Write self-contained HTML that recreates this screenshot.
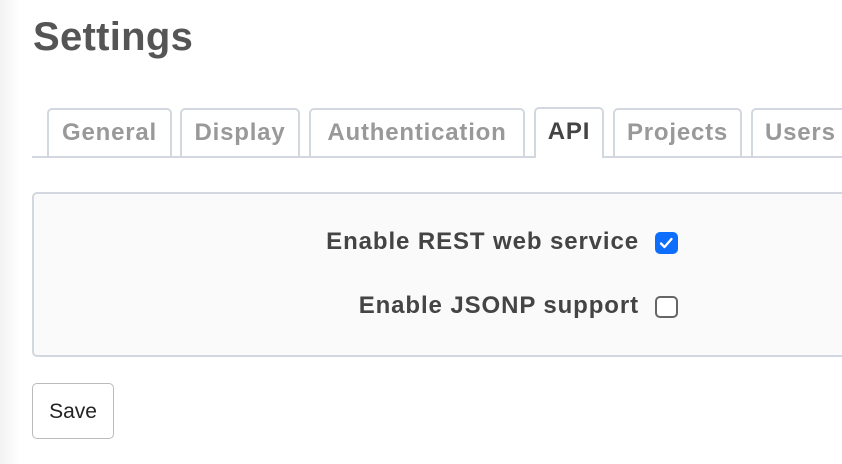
<!DOCTYPE html>
<html><head><style>
body{margin:0;width:842px;height:464px;overflow:hidden;background:#fff;font-family:"Liberation Sans",sans-serif;position:relative}
.strip{position:absolute;left:0;top:0;width:20px;height:464px;background:linear-gradient(to right,#f2f2f2,#fff)}
h1{position:absolute;left:33px;top:15px;margin:0;font-size:40px;font-weight:bold;color:#555;letter-spacing:0.3px}
.line{position:absolute;left:32px;right:0;top:156px;height:2px;background:#d3d8e0}
.tab{position:absolute;top:108px;height:48px;border:2px solid #d3d8e0;border-bottom:none;border-radius:5px 5px 0 0;box-sizing:border-box;font-weight:bold;font-size:24px;letter-spacing:0.8px;color:#999;line-height:46px;text-align:center;background:#fff;white-space:nowrap}
.tab.a{top:107px;height:51px;color:#444}
.panel{position:absolute;left:32px;top:192px;width:830px;height:165px;box-sizing:border-box;border:2px solid #d3d8e0;border-radius:5px;background:#fafafa}
.lbl{position:absolute;right:203px;font-weight:bold;font-size:24px;letter-spacing:0.9px;color:#444}
.cb{position:absolute;left:655px;width:23px;height:22px;box-sizing:border-box;border-radius:5px}
.btn{position:absolute;left:32px;top:383px;width:82px;height:56px;box-sizing:border-box;border:1.5px solid #bbb;border-radius:5px;font-size:21px;line-height:56px;text-align:center;color:#222;background:#fff}
</style></head><body>
<div class="strip"></div>
<h1>Settings</h1>
<div class="line"></div>
<div class="tab" style="left:47px;width:125px">General</div>
<div class="tab" style="left:180px;width:120px">Display</div>
<div class="tab" style="left:309px;width:216px">Authentication</div>
<div class="tab a" style="left:534px;width:70px">API</div>
<div class="tab" style="left:613px;width:129px">Projects</div>
<div class="tab" style="left:751px;width:110px;text-align:left;padding-left:12px">Users</div>
<div class="panel"></div>
<div class="lbl" style="top:228px">Enable REST web service</div>
<div class="lbl" style="top:292px">Enable JSONP support</div>
<div class="cb" style="top:232px;background:#0d6efd"><svg width="23" height="22" viewBox="0 0 23 22"><path d="M6 11.5l3.5 3.5 7-8" fill="none" stroke="#fff" stroke-width="2.3" stroke-linecap="round" stroke-linejoin="round"/></svg></div>
<div class="cb" style="top:296px;border:2px solid #666;background:#fff"></div>
<div class="btn">Save</div>
</body></html>
